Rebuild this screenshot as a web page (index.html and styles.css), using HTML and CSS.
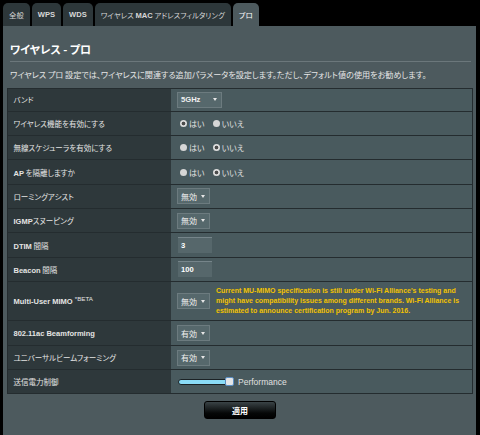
FILE: index.html
```html
<!DOCTYPE html>
<html lang="ja">
<head>
<meta charset="utf-8">
<title>ワイヤレス - プロ</title>
<link rel="stylesheet" href="styles.css">
</head>
<body>
<div class="page">
  <nav class="tabs">
    <div class="tab"><span>全般</span></div>
    <div class="tab"><span class="en">WPS</span></div>
    <div class="tab"><span class="en">WDS</span></div>
    <div class="tab"><span>ワイヤレス <span class="en">MAC</span> アドレスフィルタリング</span></div>
    <div class="tab active"><span>プロ</span></div>
  </nav>
  <section class="panel">
    <h1 class="title">ワイヤレス - プロ</h1>
    <div class="rule"></div>
    <p class="desc">ワイヤレス プロ 設定では、ワイヤレスに関連する追加パラメータを設定します。ただし、デフォルト値の使用をお勧めします。</p>
    <div class="table">
      <div class="row">
        <div class="label"><span>バンド</span></div>
        <div class="value"><div class="select band"><span class="en">5GHz</span><i class="caret"></i></div></div>
      </div>
      <div class="row">
        <div class="label"><span>ワイヤレス機能を有効にする</span></div>
        <div class="value"><div class="radios"><span class="opt"><i class="radio on"></i>はい</span><span class="opt"><i class="radio"></i>いいえ</span></div></div>
      </div>
      <div class="row">
        <div class="label"><span>無線スケジューラを有効にする</span></div>
        <div class="value"><div class="radios"><span class="opt"><i class="radio"></i>はい</span><span class="opt"><i class="radio on"></i>いいえ</span></div></div>
      </div>
      <div class="row">
        <div class="label"><span><span class="en">AP</span> を隔離しますか</span></div>
        <div class="value"><div class="radios"><span class="opt"><i class="radio"></i>はい</span><span class="opt"><i class="radio on"></i>いいえ</span></div></div>
      </div>
      <div class="row">
        <div class="label"><span>ローミングアシスト</span></div>
        <div class="value"><div class="select"><span>無効</span><i class="caret"></i></div></div>
      </div>
      <div class="row">
        <div class="label"><span><span class="en">IGMP</span>スヌーピング</span></div>
        <div class="value"><div class="select"><span>無効</span><i class="caret"></i></div></div>
      </div>
      <div class="row">
        <div class="label"><span><span class="en">DTIM</span> 間隔</span></div>
        <div class="value"><div class="num"><span class="en">3</span></div></div>
      </div>
      <div class="row">
        <div class="label"><span><span class="en">Beacon</span> 間隔</span></div>
        <div class="value"><div class="num"><span class="en">100</span></div></div>
      </div>
      <div class="row tall">
        <div class="label"><span class="en">Multi-User MIMO <sup class="beta">*BETA</sup></span></div>
        <div class="value">
          <div class="select"><span>無効</span><i class="caret"></i></div>
          <p class="note">Current MU-MIMO specification is still under Wi-Fi Alliance's testing and<br>might have compatibility issues among different brands. Wi-Fi Alliance is<br>estimated to announce certification program by Jun. 2016.</p>
        </div>
      </div>
      <div class="row">
        <div class="label"><span class="en">802.11ac Beamforming</span></div>
        <div class="value"><div class="select"><span>有効</span><i class="caret"></i></div></div>
      </div>
      <div class="row">
        <div class="label"><span>ユニバーサルビームフォーミング</span></div>
        <div class="value"><div class="select"><span>有効</span><i class="caret"></i></div></div>
      </div>
      <div class="row">
        <div class="label"><span>送信電力制御</span></div>
        <div class="value"><div class="slider"><span class="track"></span><span class="thumb"></span><span class="perf">Performance</span></div></div>
      </div>
    </div>
    <div class="actions"><button class="apply">適用</button></div>
  </section>
</div>
</body>
</html>
```
FILE: styles.css
```css
html, body {
  margin: 0;
  background: #000;
}
body {
  font-family: "Noto Sans CJK JP", "Liberation Sans", sans-serif;
  font-size: 7.5px;
  color: #e2e2e2;
  font-feature-settings: "palt" 1;
}
.page {
  margin-left: 3px;
  width: 473px;
  padding-top: 3px;
}
.en {
  font-family: "Liberation Sans", sans-serif;
  font-weight: bold;
  font-size: 7.5px;
}
.tabs {
  display: flex;
  gap: 2px;
  height: 23px;
}
.tab {
  display: flex;
  align-items: center;
  padding: 0 6px;
  background: #2d373a;
  border-radius: 5px 5px 0 0;
  color: #d6d6d6;
  font-size: 7.4px;
  white-space: nowrap;
}
.tab .en {
  font-size: 7.6px;
}
.tab.active {
  background: #4d5a5e;
  color: #fff;
}
.panel {
  background: #4d5a5e;
  min-height: 409px;
  box-sizing: border-box;
  padding: 16px 3px 0 4px;
}
.title {
  margin: 0 0 0 3px;
  font-size: 11px;
  line-height: 14px;
  font-weight: bold;
  color: #fff;
}
.rule {
  height: 1px;
  background: #6b777b;
  margin: 5px 2px 0 3px;
}
.desc {
  margin: 7px 0 0 3px;
  font-size: 8.1px;
  line-height: 12px;
  white-space: nowrap;
  color: #e6e6e6;
}
.table {
  margin-top: 7px;
  border: 1px solid #242c2f;
}
.row {
  display: flex;
  height: 24.35px;
  box-sizing: border-box;
  border-bottom: 1px solid #242c2f;
}
.row:first-child {
  height: 22.7px;
}
.row:last-child {
  height: 23.3px;
  border-bottom: 0;
}
.row.tall {
  height: 39.4px;
}
.label {
  flex: none;
  width: 163px;
  box-sizing: border-box;
  padding-left: 5.5px;
  background: #2e383b;
  display: flex;
  align-items: center;
  white-space: nowrap;
  color: #e4e4e4;
}
.value {
  flex: 1;
  background: #495a5e;
  display: flex;
  align-items: center;
  padding-left: 6px;
}
.select {
  display: inline-flex;
  align-items: center;
  gap: 4px;
  height: 16px;
  box-sizing: border-box;
  padding: 0 4px 0 3px;
  border: 1px solid #6c7b7f;
  background: #56686c;
  color: #f0f0f0;
  font-size: 8px;
}
.select .en {
  font-size: 7.6px;
}
.select.band {
  width: 45px;
  justify-content: space-between;
}
.caret {
  width: 0;
  height: 0;
  border-left: 2px solid transparent;
  border-right: 2px solid transparent;
  border-top: 3px solid #e6e6e6;
}
.radios {
  display: flex;
  align-items: center;
  margin-left: 3px;
  font-size: 8px;
}
.opt {
  display: flex;
  align-items: center;
  gap: 2px;
}
.opt:first-child {
  margin-right: 8px;
}
.radio {
  width: 7px;
  height: 7px;
  border-radius: 50%;
  background: #d6d6d6;
}
.radio.on {
  background: radial-gradient(circle, #4c4c4c 0 1.5px, #dcdcdc 2.2px);
}
.num {
  width: 34px;
  height: 16px;
  box-sizing: border-box;
  margin-left: 1px;
  padding-left: 3px;
  display: flex;
  align-items: center;
  background: #56676b;
  border-top: 1px solid #76858a;
  color: #fff;
}
.num .en {
  font-size: 7.6px;
}
.beta {
  font-size: 6.2px;
  font-weight: normal;
  vertical-align: 3px;
  line-height: 0;
}
.note {
  margin: 0 0 0 6px;
  font-family: "Liberation Sans", sans-serif;
  font-weight: bold;
  font-size: 7px;
  line-height: 10.2px;
  color: #f2c200;
}
.slider {
  display: flex;
  align-items: center;
  margin-left: 1px;
}
.track {
  width: 50px;
  height: 6px;
  box-sizing: border-box;
  border: 1px solid #1b2225;
  border-radius: 3px;
  background: #8adcf7;
}
.thumb {
  width: 9px;
  height: 9px;
  box-sizing: border-box;
  margin-left: -3px;
  background: #e4e6e8;
  border: 1px solid #5b8fc4;
  border-radius: 2px;
}
.perf {
  margin-left: 4px;
  font-family: "Liberation Sans", sans-serif;
  font-size: 8.5px;
  color: #e0e0e0;
}
.actions {
  display: flex;
  justify-content: center;
  margin-top: 7px;
}
.apply {
  width: 72px;
  height: 18px;
  padding: 0;
  border: 1px solid #000;
  border-radius: 3px;
  background: linear-gradient(#3a4346, #050707 70%, #000);
  color: #fff;
  font-family: "Noto Sans CJK JP", sans-serif;
  font-weight: bold;
  font-size: 8px;
  font-feature-settings: "palt" 1;
}
```
